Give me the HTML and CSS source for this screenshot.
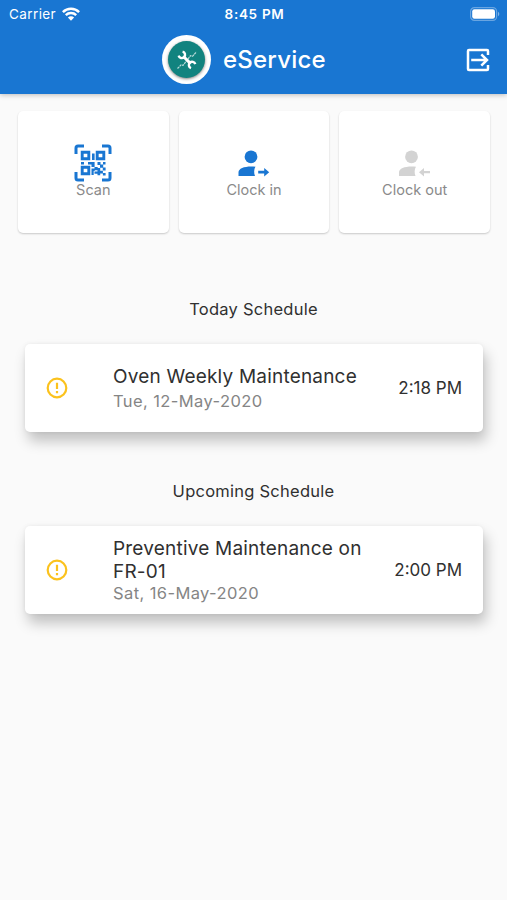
FILE: index.html
```
<!DOCTYPE html>
<html lang="en">
<head>
<meta charset="utf-8">
<title>eService</title>
<link rel="stylesheet" href="styles.css">
</head>

<body>
<header class="top">
	<div class="status">
		<div class="carrier">
			<span>Carrier</span>
			<svg class="wifi" width="18" height="14" viewBox="0 0 18 14" fill="none" stroke="#fff">
				<path d="M.9 5.1a11.6 11.6 0 0 1 16.2 0" stroke-width="2.5"/>
				<path d="M3.8 8.2a7.4 7.4 0 0 1 10.4 0" stroke-width="2.4"/>
				<path d="M9 13.7 5.9 10.5a4.4 4.4 0 0 1 6.2 0z" fill="#fff" stroke="none"/>
			</svg>
		</div>
		<div class="clock">8:45 PM</div>
		<svg class="battery" width="30" height="14" viewBox="0 0 30 14">
			<rect x=".6" y=".6" width="26" height="12.8" rx="3.8" fill="none" stroke="#fff" stroke-opacity=".35" stroke-width="1.2"/>
			<rect x="2.2" y="2.2" width="22.8" height="9.6" rx="2.2" fill="#fff"/>
			<path d="M28 4.8a2.5 2.5 0 0 1 0 4.4z" fill="#fff" fill-opacity=".45"/>
		</svg>
	</div>
	<div class="app_bar">
		<div class="brand">
			<div class="logo">
				<div class="logo_disc">
					<svg width="22" height="22" viewBox="0 0 22 22" fill="none" stroke="#fff">
						<path d="M1.500 19.500 5 16l2 .4 7.500-9.700 2 .6L20.300 3" stroke-width="1.200" stroke-dasharray="2.400 .6" opacity=".7"/>
						<path d="M7.200 7.200l7.400 7.400" stroke-width="3"/>
						<path d="M6.600 2.600a3.300 3.300 0 1 1-4 4.100M15 19.200a3.300 3.300 0 1 1 4.300-4.100" stroke-width="2.400"/>
					</svg>
				</div>
			</div>
			<h1>eService</h1>
		</div>
		<svg class="exit" width="24" height="24" viewBox="0 0 24 24" fill="none" stroke="#fff" stroke-width="2.500">
			<path d="M22 7V3q0-1-1-1H3Q2 2 2 3v18q0 1 1 1h18q1 0 1-1v-4"/>
			<path d="M5.200 12h15.500M15.300 6.300l5.700 5.700-5.700 5.700"/>
		</svg>
	</div>
</header>

<main>
	<div class="tiles">
		<div class="tile">
			<svg class="tile_icon" width="38" height="38" viewBox="0 0 38 38" fill="none" stroke="#1976d2">
				<path d="M2 10V4q0-2 2-2h6M28 2h6q2 0 2 2v6M36 28v6q0 2-2 2h-6M10 36H4q-2 0-2-2v-6" stroke-width="3"/>
				<path d="M8.200 8.200h6.600v6.600H8.200zM23.200 8.200h6.600v6.600h-6.600zM8.200 23.200h6.600v6.600H8.200z" stroke-width="2.900"/>
				<path fill="#1976d2" stroke="none" d="M18 9.500h2.600V16H18zM7 18h3v2.500H7zM14 18h6.600v5H17.500v-2.500H14zM23.500 18h3v3h-3zM29 18h2.500v2.500H29zM26 20.500h3.200v3.200H26zM17.500 24.500h3V23h3.200v3.200h-3V27h-1v4h-2.200zM28.800 23.500h2.800v3h-2.800zM23.500 24h2.700v2.700h2.700v2.800h-2.700v-2.500h-2.700zM28.900 29h2.700v2.500h-2.700zM20.500 27.500h3v-1h2.700v4.800h-2.700v-1.600h-3z"/>
			</svg>
			<span>Scan</span>
		</div>
		<div class="tile">
			<svg class="tile_icon" width="38" height="38" viewBox="0 0 38 38" fill="#1976d2">
				<circle cx="16" cy="12.800" r="6.400"/>
				<path d="M3.500 32v-3.500c0-4 5.500-6 12.600-6 1.600 0 3 .1 4.400.3-1.700 2.500-1.700 6.500-.5 9.200z"/>
				<path d="M23.200 26.800h6V24l5 4.200-5 4.200v-2.800h-6z"/>
			</svg>
			<span>Clock in</span>
		</div>
		<div class="tile">
			<svg class="tile_icon" width="38" height="38" viewBox="0 0 38 38" fill="#d3d3d3">
				<circle cx="15.500" cy="12.800" r="6.400"/>
				<path d="M3 32v-3.500c0-4 5.500-6 12.600-6 1.600 0 3 .1 4.400.3-1.700 2.500-1.700 6.500-.5 9.200z"/>
				<path d="M34 27.100h-6V24l-5 4.200 5 4.200v-3.100h6z"/>
			</svg>
			<span>Clock out</span>
		</div>
	</div>

	<h2>Today Schedule</h2>
	<div class="card">
		<svg class="alert" width="22" height="22" viewBox="0 0 22 22" fill="none" stroke="#fbc21d" stroke-width="2.200">
			<circle cx="11" cy="11" r="9.300"/>
			<path d="M11 5.700v6.300M11 14v2.200"/>
		</svg>
		<div class="job short">
			<div class="job_name">Oven Weekly Maintenance</div>
			<div class="job_date">Tue, 12-May-2020</div>
		</div>
		<div class="job_time">2:18 PM</div>
	</div>

	<h2>Upcoming Schedule</h2>
	<div class="card">
		<svg class="alert" width="22" height="22" viewBox="0 0 22 22" fill="none" stroke="#fbc21d" stroke-width="2.200">
			<circle cx="11" cy="11" r="9.300"/>
			<path d="M11 5.700v6.300M11 14v2.200"/>
		</svg>
		<div class="job">
			<div class="job_name">Preventive Maintenance on FR-01</div>
			<div class="job_date">Sat, 16-May-2020</div>
		</div>
		<div class="job_time">2:00 PM</div>
	</div>
</main>
</body>
</html>
```
FILE: styles.css
```
* {
	box-sizing: border-box;
}
body {
	margin: 0;
	min-height: 900px;
	background: #fafafa;
	font-family: Inter, "Liberation Sans", sans-serif;
	color: #303030;
}
.top {
	height: 94px;
	background: #1976d2;
	color: #fff;
	box-shadow: 0 1px 5px rgba(0,0,0,.25);
}
.status {
	height: 27px;
	padding: 0 7px 0 9px;
	display: grid;
	grid-template-columns: 1fr auto 1fr;
	align-items: center;
	font-size: 13.5px;
}
.carrier {
	display: flex;
	align-items: center;
	gap: 6px;
	letter-spacing: .4px;
}
.clock {
	font-size: 13.5px;
	font-weight: 600;
	letter-spacing: .7px;
}
.battery {
	justify-self: end;
}
.app_bar {
	height: 65px;
	padding: 0 17px 0 162px;
	display: flex;
	align-items: center;
	justify-content: space-between;
}
.brand {
	display: flex;
	align-items: center;
	gap: 12px;
}
.logo {
	width: 49px;
	height: 49px;
	border-radius: 50%;
	background: #fff;
	display: flex;
	align-items: center;
	justify-content: center;
}
.logo_disc {
	width: 37px;
	height: 37px;
	border-radius: 50%;
	background: #11837f;
	box-shadow: 0 1px 3px rgba(0,0,0,.5);
	display: flex;
	align-items: center;
	justify-content: center;
}
h1 {
	margin: 0;
	font-size: 24px;
	font-weight: 500;
	letter-spacing: .2px;
}
.tiles {
	padding: 17px 17px 0 18px;
	display: grid;
	grid-template-columns: repeat(3, 1fr);
	gap: 10px;
}
.tile {
	height: 122px;
	border-radius: 5px;
	background: #fff;
	box-shadow: 0 1px 2px rgba(0,0,0,.2);
	display: flex;
	flex-direction: column;
	align-items: center;
	padding-top: 33px;
	font-size: 14.5px;
	line-height: 15px;
	color: #8a8a8a;
}
h2 {
	margin: 0;
	padding-top: 66px;
	height: 111px;
	text-align: center;
	font-size: 16.5px;
	font-weight: 400;
	line-height: 20px;
	letter-spacing: .25px;
}
.card {
	height: 88px;
	margin: 0 24px 0 25px;
	padding: 0 21px;
	border-radius: 5px;
	background: #fff;
	box-shadow: 3px 9px 14px rgba(0,0,0,.23), 0 0 4px rgba(0,0,0,.06);
	display: flex;
	align-items: center;
}
.card + h2 {
	padding-top: 49px;
	height: 94px;
}
.job {
	flex: 1;
	margin-left: 45px;
	padding-right: 20px;
}
.job_name {
	font-size: 19px;
	line-height: 23px;
	letter-spacing: .2px;
}
.job_date {
	font-size: 16.5px;
	line-height: 20px;
	letter-spacing: .4px;
	color: #858585;
}
.short .job_date {
	padding-top: 3px;
}
.job_time {
	font-size: 17px;
}
```
